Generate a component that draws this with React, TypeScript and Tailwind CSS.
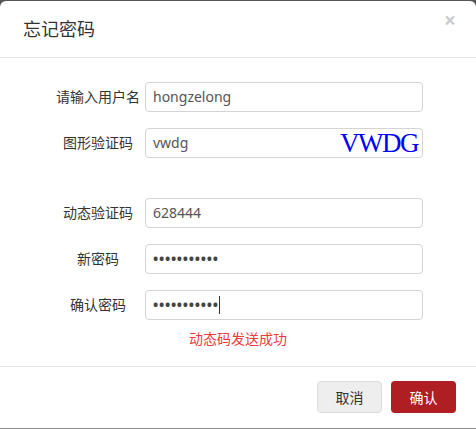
import React from "react";

const font = { fontFamily: '"Noto Sans", "Noto Sans CJK SC", sans-serif' };

function Row({ label, children }: { label: string; children: React.ReactNode }) {
  return (
    <div className="flex items-center h-[30px]">
      <div className="w-[84px] ml-[56px] text-center text-[14px] text-[#333] leading-none">{label}</div>
      <div className="ml-[5px] w-[278px] h-[30px] relative">{children}</div>
    </div>
  );
}

function Field({ value, dots, children }: { value: string; dots?: boolean; children?: React.ReactNode }) {
  return (
    <div className="w-full h-full border border-[#d4d4d4] rounded-[4px] bg-white flex items-center pl-[7px] text-[14px] text-[#555] leading-none relative">
      <span className={dots ? "tracking-[0.7px] font-bold text-[#444]" : ""}>{value}</span>
      {children}
    </div>
  );
}

export default function App() {
  return (
    <div className="w-[476px] h-[429px] bg-[#555] pt-px" style={font}>
      <div className="h-[428px] bg-white rounded-tl-[6px] rounded-tr-[6px] border-b border-[#8a8a8a] flex flex-col">
        <div className="h-[57px] shrink-0 border-b border-[#e5e5e5] flex items-center justify-between pl-[23px] pr-[20px]">
          <div className="text-[18px] text-[#333] leading-none">忘记密码</div>
          <div className="self-start mt-[9px] text-[21px] font-bold leading-none text-black opacity-20">×</div>
        </div>
        <div className="flex-1 pt-[24px] flex flex-col">
          <div className="flex flex-col gap-[16px]">
            <Row label="请输入用户名">
              <Field value="hongzelong" />
            </Row>
            <Row label="图形验证码">
              <Field value="vwdg">
                <span
                  className="absolute right-[4px] top-1/2 -translate-y-1/2 text-[27px] text-[#0000ff] tracking-[-1.5px] leading-none"
                  style={{ fontFamily: '"Liberation Serif", serif' }}
                >
                  VWDG
                </span>
              </Field>
            </Row>
          </div>
          <div className="flex flex-col gap-[16px] mt-[40px]">
            <Row label="动态验证码">
              <Field value="628444" />
            </Row>
            <Row label="新密码">
              <Field value="•••••••••••" dots />
            </Row>
            <Row label="确认密码">
              <Field value="•••••••••••" dots>
                <span className="w-px h-[18px] bg-[#333]" />
              </Field>
            </Row>
          </div>
          <div className="mt-[8px] h-[20px] flex items-center justify-center text-[14px] text-[#ee3b3b]">
            动态码发送成功
          </div>
        </div>
        <div className="h-[62px] shrink-0 border-t border-[#e5e5e5] flex items-start justify-end gap-[9px] pt-[14px] pr-[20px]">
          <button className="w-[65px] h-[32px] rounded-[4px] bg-[#eeeeee] border border-[#dcdcdc] text-[14px] text-[#333]">
            取消
          </button>
          <button className="w-[65px] h-[32px] rounded-[4px] bg-[#ae1e23] text-[14px] text-white">
            确认
          </button>
        </div>
      </div>
    </div>
  );
}
